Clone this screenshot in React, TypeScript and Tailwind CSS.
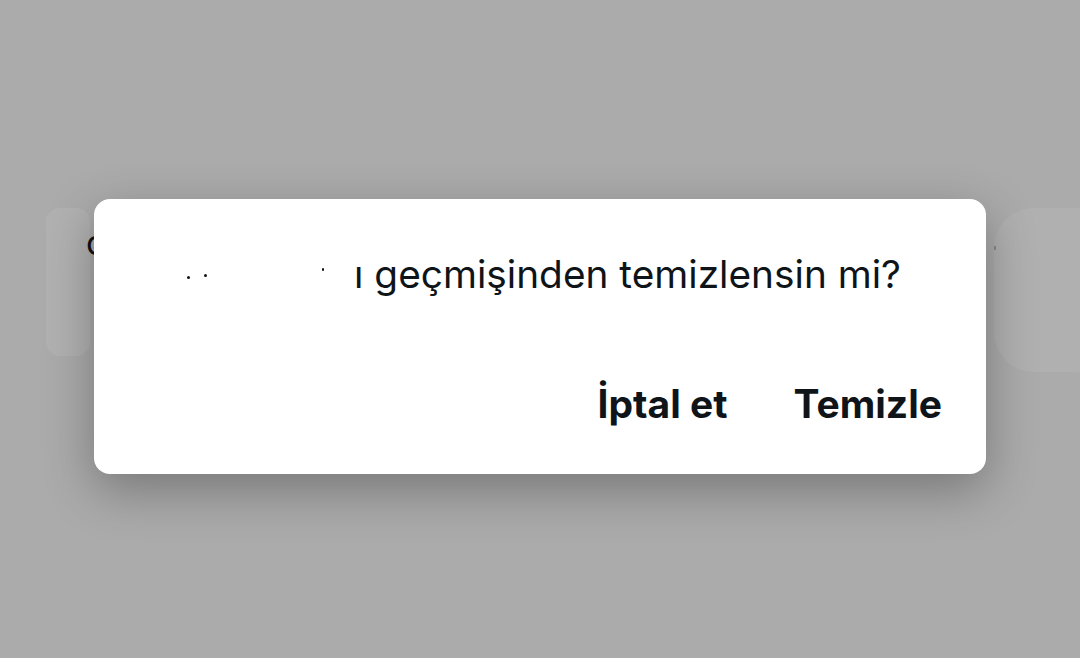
// Confirm dialog over a dimmed page.

function Speck({ className }: { className: string }) {
  return <span className={`absolute rounded-full bg-[#0f1419] ${className}`} />;
}

function BackdropShapes() {
  return (
    <>
      {/* left card edge behind the overlay */}
      <div className="absolute left-[46px] top-[208px] h-[148px] w-[44px] rounded-[14px] bg-[#b1b1b1]" />
      <span className="absolute left-[86px] top-[226px] text-[34px] leading-none text-[#111]">c</span>
      {/* right card edge behind the overlay */}
      <div className="absolute left-[994px] top-[208px] h-[164px] w-[120px] rounded-[40px] bg-[#b0b0b0]" />
      <span className="absolute left-[994px] top-[246px] h-[4px] w-[2px] bg-[#888]" />
    </>
  );
}

export default function App() {
  return (
    <div
      className="relative flex h-[658px] w-[1080px] justify-center overflow-hidden bg-[#ababab] pt-[199px]"
      style={{ fontFamily: "Inter, Roboto, 'Liberation Sans', sans-serif" }}
    >
      <BackdropShapes />
      <div className="relative z-10 flex h-[275px] w-[892px] flex-col rounded-[16px] bg-white shadow-[0_16px_50px_rgba(0,0,0,0.3)]">
        <p className="mt-[52px] flex items-baseline justify-center pr-[14px] text-[38.8px] leading-[46px] text-[#0f1419]">
          <span className="relative mr-[12px] inline-block h-[30px] w-[177px]">
            <Speck className="left-[22px] top-[18px] h-[3px] w-[3px]" />
            <Speck className="left-[39px] top-[16px] h-[3px] w-[3px]" />
            <Speck className="left-[157px] top-[10px] h-[3px] w-[2px]" />
          </span>
          <span>ı geçmişinden temizlensin mi?</span>
        </p>
        <div className="mt-auto mb-[46px] flex justify-end gap-[66px] pr-[44px] text-[39px] font-bold leading-[48px] text-[#0f1419]">
          <button type="button">İptal et</button>
          <button type="button">Temizle</button>
        </div>
      </div>
    </div>
  );
}
